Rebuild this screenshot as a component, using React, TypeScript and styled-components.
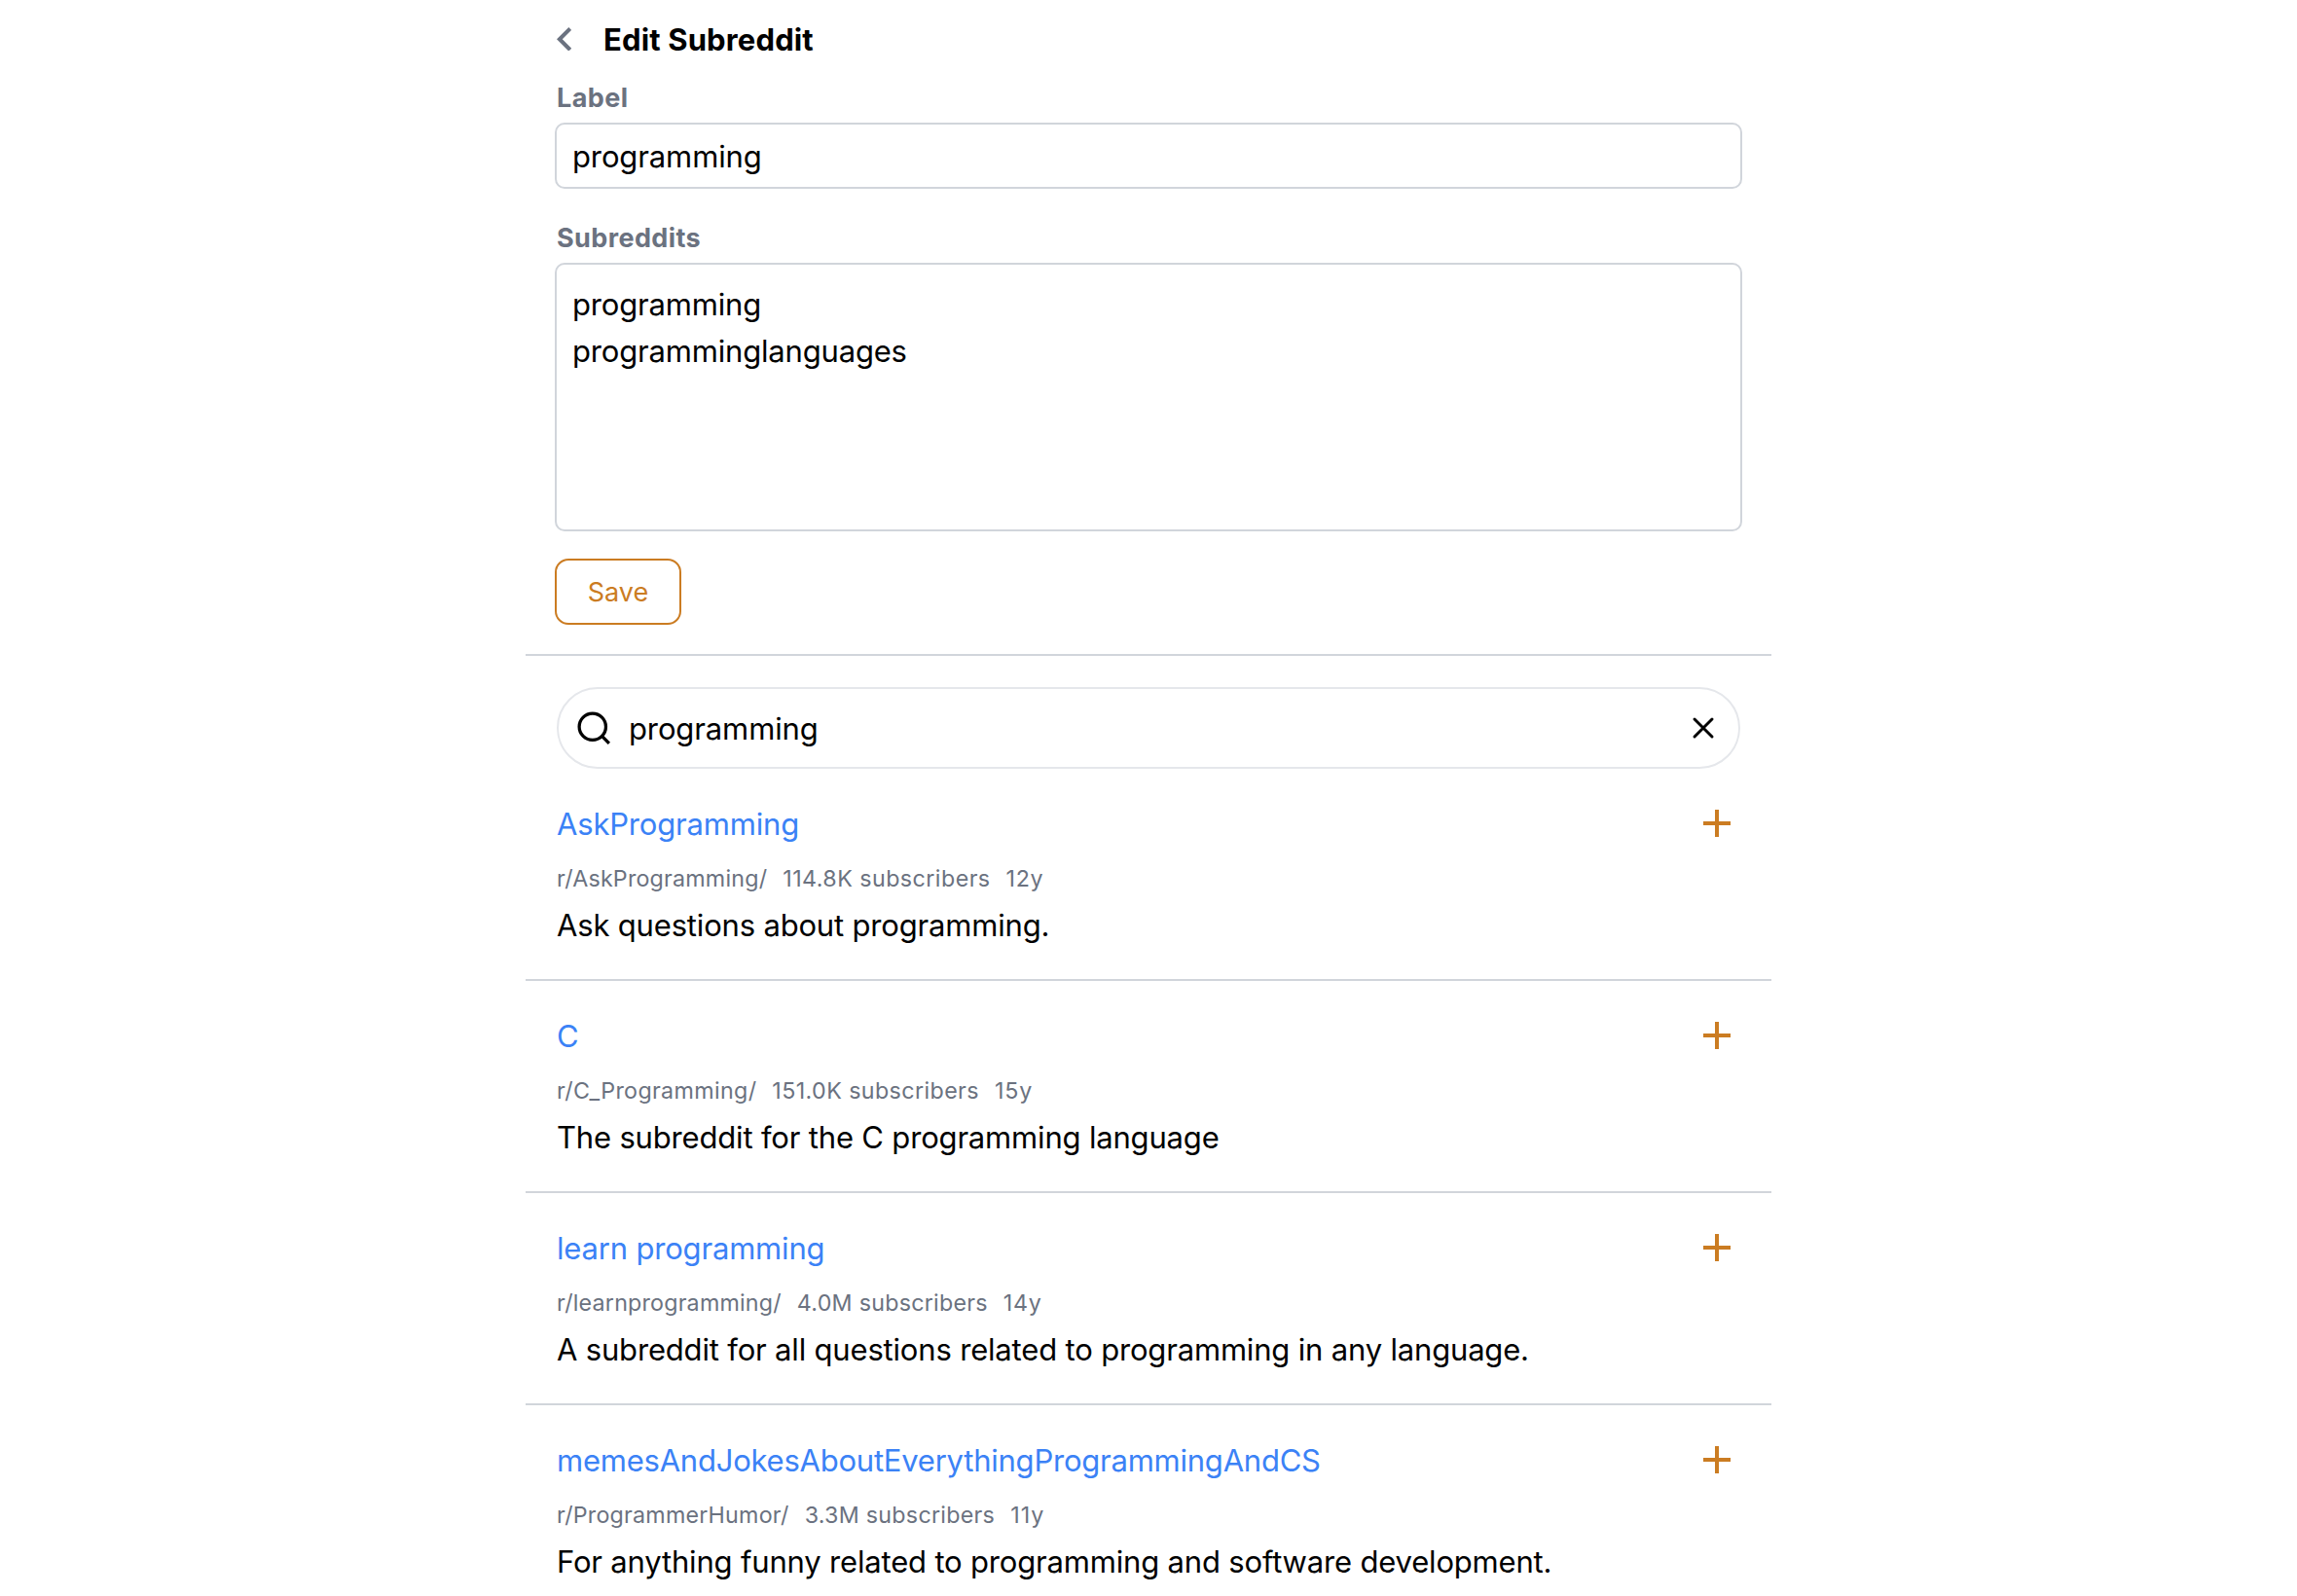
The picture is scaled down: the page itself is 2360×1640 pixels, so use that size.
import React, { useState } from 'react';
import styled, { createGlobalStyle } from 'styled-components';

const colors = {
  text: '#000000',
  muted: '#6b7280',
  link: '#3b82f6',
  accent: '#cb7c22',
  border: '#d1d5db',
  softBorder: '#e5e7eb',
};

const GlobalStyle = createGlobalStyle`
  *, *::before, *::after { box-sizing: border-box; }
  body {
    margin: 0;
    background: #ffffff;
    color: ${colors.text};
    font-family: Inter, 'Liberation Sans', sans-serif;
  }
  input, textarea, button { font: inherit; color: inherit; }
`;

const Page = styled.main`
  width: 1280px;
  height: 1640px;
  margin: 0 auto;
  overflow: hidden;
`;

const Header = styled.header`
  display: flex;
  align-items: center;
  height: 80px;
  padding-left: 32px;
`;

const BackButton = styled.button`
  display: flex;
  width: 48px;
  padding: 0;
  border: 0;
  background: none;
  color: ${colors.muted};
`;

const Title = styled.h1`
  margin: 0;
  padding-top: 2px;
  font-size: 31px;
  line-height: 48px;
  font-weight: 650;
  letter-spacing: 0.15px;
`;

const Form = styled.form`
  display: flex;
  flex-direction: column;
  align-items: stretch;
  padding: 0 30px 30px;
  border-bottom: 2px solid ${colors.border};
`;

const FieldLabel = styled.label`
  margin-bottom: 5px;
  padding: 1px 0 0 2px;
  font-size: 27px;
  line-height: 40px;
  font-weight: 650;
  letter-spacing: 0.4px;
  color: ${colors.muted};
`;

const TextInput = styled.input`
  height: 68px;
  margin-bottom: 30px;
  padding: 0 16px;
  border: 2px solid ${colors.border};
  border-radius: 10px;
  outline: none;
  background: #ffffff;
  font-size: 31px;
  letter-spacing: -0.12px;
`;

const TextArea = styled.textarea`
  height: 276px;
  margin-bottom: 28px;
  padding: 17px 16px 15px;
  border: 2px solid ${colors.border};
  border-radius: 10px;
  outline: none;
  resize: none;
  background: #ffffff;
  font-size: 31px;
  line-height: 48px;
  letter-spacing: -0.18px;
`;

const SaveButton = styled.button`
  align-self: flex-start;
  width: 130px;
  height: 68px;
  padding: 0;
  border: 2px solid ${colors.accent};
  border-radius: 14px;
  background: #ffffff;
  color: ${colors.accent};
  font-size: 27px;
`;

const SearchBar = styled.div`
  display: flex;
  align-items: center;
  height: 84px;
  margin: 32px 32px 0;
  padding: 0 18px 0 16px;
  border: 2px solid ${colors.softBorder};
  border-radius: 42px;
`;

const SearchInput = styled.input`
  flex: 1;
  min-width: 0;
  height: 48px;
  padding: 0;
  margin-left: 15px;
  border: 0;
  outline: none;
  background: none;
  font-size: 31px;
  letter-spacing: -0.12px;
`;

const ClearButton = styled.button`
  display: flex;
  padding: 0;
  border: 0;
  background: none;
`;

const Results = styled.ul`
  margin: 0;
  padding: 0;
  list-style: none;
`;

const ResultItem = styled.li`
  height: 218px;
  padding: 32px 32px 0;
  border-bottom: 2px solid ${colors.border};
`;

const ResultHead = styled.div`
  display: flex;
  align-items: center;
  justify-content: space-between;
  height: 48px;
`;

const ResultLink = styled.a<{ $tracking?: number }>`
  padding-top: 2px;
  font-size: 31px;
  line-height: 48px;
  letter-spacing: ${(p) => p.$tracking ?? -0.18}px;
  color: ${colors.link};
  text-decoration: none;
`;

const AddButton = styled.button`
  display: flex;
  margin-right: 10px;
  padding: 0;
  border: 0;
  background: none;
  color: ${colors.accent};
`;

const Meta = styled.div`
  display: flex;
  gap: 16px;
  margin: 15px 0 6px;
  font-size: 23.25px;
  line-height: 36px;
  color: ${colors.muted};
`;

const MetaText = styled.span<{ $tracking: number }>`
  letter-spacing: ${(p) => p.$tracking}px;
  white-space: nowrap;
`;

const Description = styled.p`
  margin: 0;
  font-size: 31px;
  line-height: 48px;
  letter-spacing: -0.175px;
  white-space: nowrap;
`;

const ChevronLeftIcon = () => (
  <svg width="15.2" height="24.6" viewBox="8 6 7.41 12" fill="currentColor">
    <path d="M15.41 7.41 14 6l-6 6 6 6 1.41-1.41L10.83 12z" />
  </svg>
);

const SearchIcon = () => (
  <svg width="41" height="41" viewBox="0 0 24 24" fill="none" stroke="currentColor" strokeWidth="1.9">
    <circle cx="11" cy="11" r="8" />
    <path d="m21 21-4.35-4.35" />
  </svg>
);

const CloseIcon = () => (
  <svg width="36" height="36" viewBox="0 0 24 24" fill="none" stroke="currentColor" strokeWidth="2" strokeLinecap="round">
    <path d="M18 6 6 18M6 6l12 12" />
  </svg>
);

const PlusIcon = () => (
  <svg width="28" height="28" viewBox="0 0 28 28" fill="none" stroke="currentColor" strokeWidth="4">
    <path d="M14 0v28M0 14h28" />
  </svg>
);

type Tracked = [text: string, tracking: number];

interface Subreddit {
  title: string;
  tracking?: number;
  path: Tracked;
  subscribers: Tracked;
  age: Tracked;
  description: string;
}

const subreddits: Subreddit[] = [
  {
    title: 'AskProgramming',
    path: ['r/AskProgramming/', 0.2],
    subscribers: ['114.8K subscribers', 0.45],
    age: ['12y', 0.7],
    description: 'Ask questions about programming.',
  },
  {
    title: 'C',
    path: ['r/C_Programming/', 0.35],
    subscribers: ['151.0K subscribers', 0.4],
    age: ['15y', 0.9],
    description: 'The subreddit for the C programming language',
  },
  {
    title: 'learn programming',
    path: ['r/learnprogramming/', 0.2],
    subscribers: ['4.0M subscribers', 0.25],
    age: ['14y', 0.7],
    description: 'A subreddit for all questions related to programming in any language.',
  },
  {
    title: 'memesAndJokesAboutEverythingProgrammingAndCS',
    tracking: -0.23,
    path: ['r/ProgrammerHumor/', 0.22],
    subscribers: ['3.3M subscribers', 0.27],
    age: ['11y', 1.1],
    description: 'For anything funny related to programming and software development.',
  },
];

const SubredditResult = ({ item }: { item: Subreddit }) => (
  <ResultItem>
    <ResultHead>
      <ResultLink $tracking={item.tracking}>{item.title}</ResultLink>
      <AddButton type="button" aria-label="Add">
        <PlusIcon />
      </AddButton>
    </ResultHead>
    <Meta>
      {[item.path, item.subscribers, item.age].map(([text, tracking]) => (
        <MetaText key={text} $tracking={tracking}>
          {text}
        </MetaText>
      ))}
    </Meta>
    <Description>{item.description}</Description>
  </ResultItem>
);

export default function App() {
  const [label, setLabel] = useState('programming');
  const [names, setNames] = useState('programming\nprogramminglanguages');
  const [query, setQuery] = useState('programming');

  return (
    <>
      <GlobalStyle />
      <Page>
        <Header>
          <BackButton type="button" aria-label="Back">
            <ChevronLeftIcon />
          </BackButton>
          <Title>Edit Subreddit</Title>
        </Header>
        <Form onSubmit={(e) => e.preventDefault()}>
          <FieldLabel htmlFor="label">Label</FieldLabel>
          <TextInput id="label" value={label} onChange={(e) => setLabel(e.target.value)} />
          <FieldLabel htmlFor="subreddits">Subreddits</FieldLabel>
          <TextArea
            id="subreddits"
            spellCheck={false}
            value={names}
            onChange={(e) => setNames(e.target.value)}
          />
          <SaveButton type="submit">Save</SaveButton>
        </Form>
        <SearchBar>
          <SearchIcon />
          <SearchInput value={query} onChange={(e) => setQuery(e.target.value)} />
          <ClearButton type="button" aria-label="Clear" onClick={() => setQuery('')}>
            <CloseIcon />
          </ClearButton>
        </SearchBar>
        <Results>
          {subreddits.map((item) => (
            <SubredditResult key={item.title} item={item} />
          ))}
        </Results>
      </Page>
    </>
  );
}
